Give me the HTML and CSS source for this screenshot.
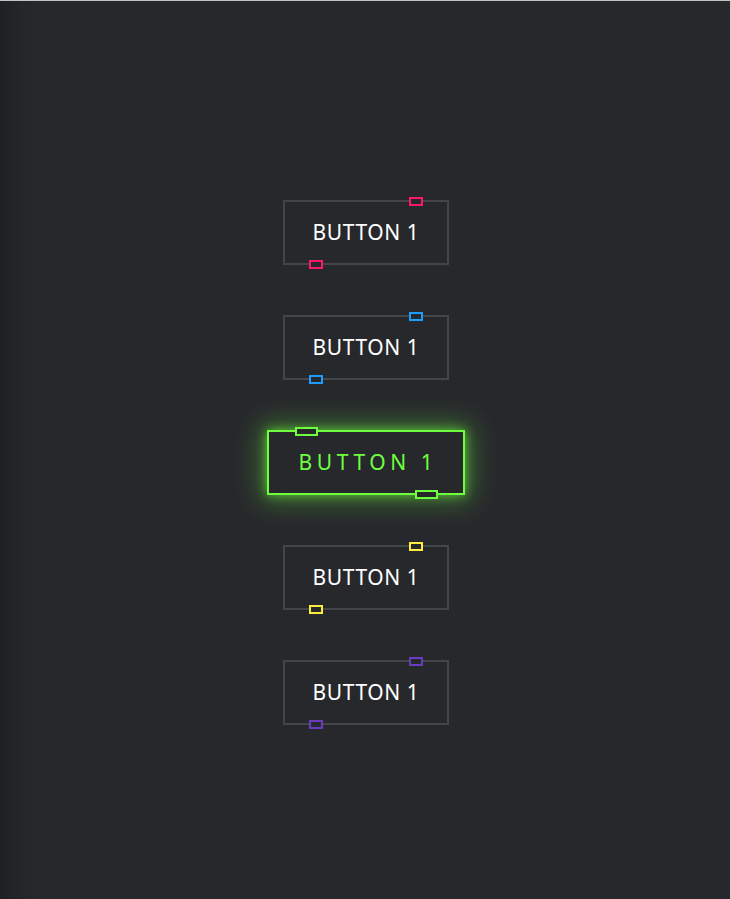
FILE: index.html
```html
<!DOCTYPE html>
<html lang="en">
<head>
<meta charset="utf-8">
<title>Neon Buttons</title>
<link rel="stylesheet" href="styles.css">
</head>
<body>
<main class="stack">
  <a class="btn pink" href="#"><span class="label">BUTTON 1</span><i class="mark mark-a"></i><i class="mark mark-b"></i></a>
  <a class="btn blue" href="#"><span class="label">BUTTON 1</span><i class="mark mark-a"></i><i class="mark mark-b"></i></a>
  <a class="btn green active" href="#"><span class="label">BUTTON 1</span><i class="mark mark-a"></i><i class="mark mark-b"></i></a>
  <a class="btn yellow" href="#"><span class="label">BUTTON 1</span><i class="mark mark-a"></i><i class="mark mark-b"></i></a>
  <a class="btn purple" href="#"><span class="label">BUTTON 1</span><i class="mark mark-a"></i><i class="mark mark-b"></i></a>
</main>
</body>
</html>
```
FILE: styles.css
```css
html, body {
  margin: 0;
  padding: 0;
}
body {
  width: 730px;
  height: 899px;
  box-sizing: border-box;
  border-top: 1px solid #c4c4c4;
  background: linear-gradient(to right, #1f2023 0px, #25262a 22px, #27282c 40px, #27282c 100%);
  font-family: "Noto Sans", "Lato", sans-serif;
  overflow: hidden;
}
.stack {
  display: flex;
  flex-direction: column;
  align-items: center;
  gap: 50px;
  padding-top: 199px;
  padding-left: 2px;
}
.btn {
  position: relative;
  display: flex;
  align-items: center;
  justify-content: center;
  width: 166px;
  height: 65px;
  box-sizing: border-box;
  border: 2px solid #444549;
  background: #27282c;
  color: #ffffff;
  text-decoration: none;
  font-size: 21px;
  letter-spacing: 0.6px;
}
.label {
  margin-top: -1px;
}
.mark {
  position: absolute;
  width: 14px;
  height: 9px;
  box-sizing: border-box;
  border: 2px solid var(--clr);
  background: #27282c;
}
.mark-a {
  top: -5px;
  right: 24px;
}
.mark-b {
  bottom: -6px;
  left: 24px;
}
.pink { --clr: #ff1867; }
.blue { --clr: #1e9bff; }
.green { --clr: #6eff3e; }
.yellow { --clr: #ffeb3b; }
.purple { --clr: #6a3bc0; }

.btn.active {
  width: 198px;
  border-color: var(--clr);
  color: var(--clr);
  letter-spacing: 4.6px;
  box-shadow: 0 0 10px rgba(110, 255, 62, 0.65), 0 0 28px 6px rgba(110, 255, 62, 0.35);
}
.btn.active .label {
  padding-left: 4px;
}
.btn.active .mark {
  width: 23px;
}
.btn.active .mark-a {
  right: auto;
  left: 26px;
}
.btn.active .mark-b {
  left: auto;
  right: 25px;
}
```
